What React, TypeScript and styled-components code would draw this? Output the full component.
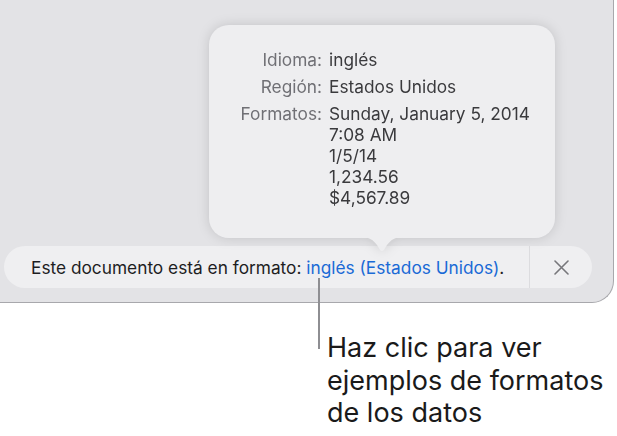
import * as React from 'react';
import styled, { createGlobalStyle } from 'styled-components';

const GlobalStyle = createGlobalStyle`
  html, body {
    margin: 0;
    padding: 0;
    background: #ffffff;
  }
  body {
    font-family: Inter, "Noto Sans", "Liberation Sans", sans-serif;
    -webkit-font-smoothing: antialiased;
  }
`;

const Page = styled.div`
  width: 617px;
  height: 436px;
  overflow: hidden;
  display: flex;
  flex-direction: column;
`;

const Window = styled.div`
  position: relative;
  box-sizing: border-box;
  width: 614px;
  height: 303px;
  background: #e3e3e6;
  border-right: 1px solid #a8a8ac;
  border-bottom: 1px solid #a8a8ac;
  border-bottom-right-radius: 22px;
  display: flex;
  flex-direction: column;
  justify-content: flex-end;
  padding: 0 0 14px 4px;
`;

const InfoBar = styled.div`
  width: 588px;
  height: 42px;
  border-radius: 21px;
  background: #efeff1;
  display: flex;
  align-items: center;
`;

const Message = styled.div`
  flex: 1;
  padding-left: 27px;
  font-size: 17.3px;
  color: #1d1d1f;
  white-space: nowrap;
`;

const LangLink = styled.span`
  color: #1a6ad6;
`;

const Divider = styled.div`
  width: 1px;
  align-self: stretch;
  background: #dcdcdf;
`;

const CloseButton = styled.div`
  width: 62px;
  display: flex;
  align-items: center;
  justify-content: center;
`;

const Popover = styled.div`
  position: absolute;
  left: 209px;
  top: 25px;
  width: 346px;
  filter: drop-shadow(0 0 6px rgba(0, 0, 0, 0.14));
`;

const PopoverBody = styled.div`
  box-sizing: border-box;
  height: 213px;
  border-radius: 20px;
  background: #eeeef0;
  padding-top: 24px;
  display: grid;
  grid-template-columns: 113px auto;
  column-gap: 7px;
  row-gap: 6px;
  align-content: start;
  font-size: 17.3px;
  line-height: 21px;
`;

const Label = styled.div`
  text-align: right;
  color: #707075;
`;

const Value = styled.div`
  color: #3a3a3d;
`;

const Pointer = styled.svg`
  display: block;
  margin-left: 151px;
  margin-top: -1px;
`;

const Callout = styled.div`
  display: flex;
  margin-left: 318px;
`;

const CalloutLine = styled.div`
  width: 2px;
  height: 71px;
  margin-top: -25px;
  background: #8e8e92;
  position: relative;
`;

const CalloutText = styled.div`
  padding-left: 7px;
  margin-top: 29px;
  font-size: 27px;
  line-height: 32.5px;
  color: #1a1a1a;
  white-space: nowrap;
`;

const rows: [string, string[]][] = [
  ['Idioma:', ['inglés']],
  ['Región:', ['Estados Unidos']],
  ['Formatos:', ['Sunday, January 5, 2014', '7:08 AM', '1/5/14', '1,234.56', '$4,567.89']],
];

export default function App() {
  return (
    <Page>
      <GlobalStyle />
      <Window>
        <Popover>
          <PopoverBody>
            {rows.map(([label, values]) => (
              <React.Fragment key={label}>
                <Label>{label}</Label>
                <Value>
                  {values.map((v) => (
                    <div key={v}>{v}</div>
                  ))}
                </Value>
              </React.Fragment>
            ))}
          </PopoverBody>
          <Pointer width="44" height="15" viewBox="0 0 44 15">
            <path
              d="M0 0 C10 0 13 3 17 8 C19 11 20.5 14 22 14 C23.5 14 25 11 27 8 C31 3 34 0 44 0 Z"
              fill="#eeeef0"
            />
          </Pointer>
        </Popover>
        <InfoBar>
          <Message>
            Este documento está en formato:{' '}
            <LangLink>inglés (Estados Unidos)</LangLink>.
          </Message>
          <Divider />
          <CloseButton>
            <svg width="15" height="15" viewBox="0 0 15 15">
              <path
                d="M1 1 L14 14 M14 1 L1 14"
                stroke="#77777b"
                strokeWidth="1.6"
                strokeLinecap="round"
              />
            </svg>
          </CloseButton>
        </InfoBar>
      </Window>
      <Callout>
        <CalloutLine />
        <CalloutText>
          Haz clic para ver
          <br />
          ejemplos de formatos
          <br />
          de los datos
        </CalloutText>
      </Callout>
    </Page>
  );
}
